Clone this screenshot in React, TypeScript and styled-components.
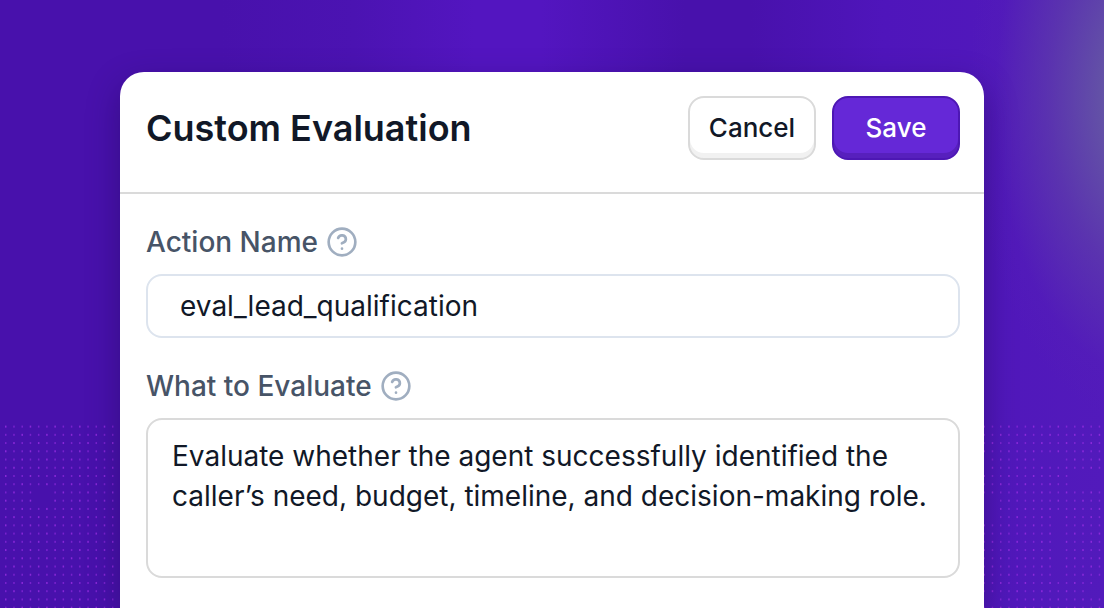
import { useState } from 'react';
import styled, { createGlobalStyle, css } from 'styled-components';
import { CircleHelp } from 'lucide-react';

const $ink = '#111827';
const $label = '#475467';
const $icon = '#a0aec0';
const $line = '#dadada';
const $inputLine = '#dde4ee';
const $white = '#ffffff';
const $violet = '#6528d7';
const $violetDark = '#4d17b4';

const GlobalStyle = createGlobalStyle`
  * {
    box-sizing: border-box;
  }
  body {
    margin: 0;
    font-family: 'Inter', sans-serif;
    color: ${$ink};
  }
`;

const Page = styled.main`
  position: relative;
  min-height: 100vh;
  padding: 72px 120px 0px;
  display: flex;
  overflow: hidden;
  background:
    radial-gradient(ellipse 180px 330px at 104% 16%, #6a68a2 0%, rgba(101, 88, 164, 0.9) 25%, rgba(94, 62, 170, 0.7) 55%, rgba(86, 36, 180, 0.2) 85%, rgba(86, 36, 180, 0) 100%),
    linear-gradient(90deg, #4811ac 0%, #4811ac 20%, #4b13b2 32%, #5315c0 43%, #5315c0 49%, #4811ac 62%, #4811ac 68%, #4f15bb 80%, #521abb 100%);
`;

const DotSvg = styled.svg<{ $side: 'left' | 'right' }>`
  position: absolute;
  ${({ $side }) => $side}: 0px;
  bottom: 0px;
  width: 120px;
  height: 184px;
  fill: #9a2ee4;
`;

const Card = styled.form`
  position: relative;
  flex: 1;
  display: flex;
  flex-direction: column;
  background: ${$white};
  border-radius: 24px 24px 0px 0px;
  box-shadow: 0px 12px 32px rgba(24, 8, 70, 0.4);
`;

const Header = styled.header`
  display: flex;
  align-items: flex-start;
  justify-content: space-between;
  padding: 24px 24px 32px 26px;
  border-bottom: 2px solid ${$line};
`;

const Title = styled.h1`
  margin: 0px;
  font-size: 36px;
  font-weight: 600;
  line-height: 64px;
`;

const Actions = styled.div`
  display: flex;
  gap: 16px;
`;

const Button = styled.button<{ $primary?: boolean }>`
  width: 128px;
  height: 64px;
  padding: 0px 0px 2px;
  border: 2px solid ${$line};
  border-radius: 16px;
  background: ${$white};
  box-shadow: inset 0px -5px 0px #f1f1f1;
  color: ${$ink};
  font-family: inherit;
  font-size: 26px;
  font-weight: 500;
  cursor: pointer;
  ${({ $primary }) => $primary && css`
    border-color: ${$violetDark};
    background: ${$violet};
    box-shadow: inset 0px -5px 0px #5720bd;
    color: ${$white};
  `}
`;

const Fields = styled.div`
  display: flex;
  flex-direction: column;
  gap: 32px;
  padding: 32px 24px 30px 26px;
`;

const Field = styled.div`
  display: flex;
  flex-direction: column;
  gap: 16px;
`;

const LabelRow = styled.div`
  display: flex;
  align-items: center;
  gap: 8px;
  height: 32px;
  color: ${$icon};
`;

const Label = styled.label`
  color: ${$label};
  font-size: 28px;
  font-weight: 500;
`;

const control = css`
  width: 100%;
  border-radius: 16px;
  outline: none;
  background: ${$white};
  color: ${$ink};
  font-family: inherit;
  font-size: 28px;
  line-height: 40px;
`;

const TextInput = styled.input`
  ${control}
  height: 64px;
  padding: 0px 32px;
  border: 2px solid ${$inputLine};
`;

const TextArea = styled.textarea`
  ${control}
  height: 160px;
  padding: 16px 24px;
  border: 2px solid ${$line};
  resize: none;
`;

// 'x' is a lit dot, '.' is a hole in the grid
const leftDots = [
  ...Array(8).fill('xxxxxxxxxxxxxx'),
  'xxxx..xxxxxxxx',
  'xxxx..xxxxxxxx',
  ...Array(13).fill('xxxxxxxxxxxxxx'),
];

const rightDots = [
  ...Array(4).fill('xxxxxxxxxxxxxxx'),
  '.xxxxxx...xxxxx',
  '.xxxxxxxxxxxxxx',
  'xxxxxxxxxxx....',
  'xxxxxxxxxxx....',
  'xxxxxxxxxxxxxxx',
  '..xxxxxxxxxxxxx',
  '..xxxxxxxxxxxxx',
  '..xxxxxxx.xxxxx',
  ...Array(7).fill('xxxxxxxxx.xxxxx'),
  'xxxxxxxxxxxxxx.',
  'xxxxxxxxxxxxx..',
  '..xxxxxxxxxxxxx',
  'xxxxxxxxxxxxxxx',
];

interface IDotField {
  side: 'left' | 'right';
  rows: string[];
  start: number;
}

function DotField({ side, rows, start }: IDotField) {
  const step = 8.23;
  return (
    <DotSvg $side={side} viewBox='0 0 120 184' aria-hidden='true'>
      {rows.flatMap((row, y) => (
        row.split('').map((dot, x) => dot === 'x' && (
          <rect
            key={`${x}_${y}`}
            x={start + x * step}
            y={1.6 + y * step}
            width='1.5'
            height='2'
            opacity={(x + y) % 3 ? 0.6 : 0.8}
          />
        ))
      ))}
    </DotSvg>
  );
}

export default function App() {
  const [name, setName] = useState('eval_lead_qualification');
  const [prompt, setPrompt] = useState(
    'Evaluate whether the agent successfully identified the caller’s need, budget, timeline, and decision-making role.'
  );

  return (
    <Page>
      <GlobalStyle />
      <DotField side='left' rows={leftDots} start={5} />
      <DotField side='right' rows={rightDots} start={-0.5} />
      <Card onSubmit={(e) => e.preventDefault()}>
        <Header>
          <Title>Custom Evaluation</Title>
          <Actions>
            <Button type='button'>Cancel</Button>
            <Button type='submit' $primary>Save</Button>
          </Actions>
        </Header>
        <Fields>
          <Field>
            <LabelRow>
              <Label htmlFor='action-name'>Action Name</Label>
              <CircleHelp size={32} strokeWidth={2} />
            </LabelRow>
            <TextInput
              id='action-name'
              value={name}
              onChange={(e) => setName(e.target.value)}
            />
          </Field>
          <Field>
            <LabelRow>
              <Label htmlFor='what-to-evaluate'>What to Evaluate</Label>
              <CircleHelp size={32} strokeWidth={2} />
            </LabelRow>
            <TextArea
              id='what-to-evaluate'
              value={prompt}
              onChange={(e) => setPrompt(e.target.value)}
            />
          </Field>
        </Fields>
      </Card>
    </Page>
  );
}
